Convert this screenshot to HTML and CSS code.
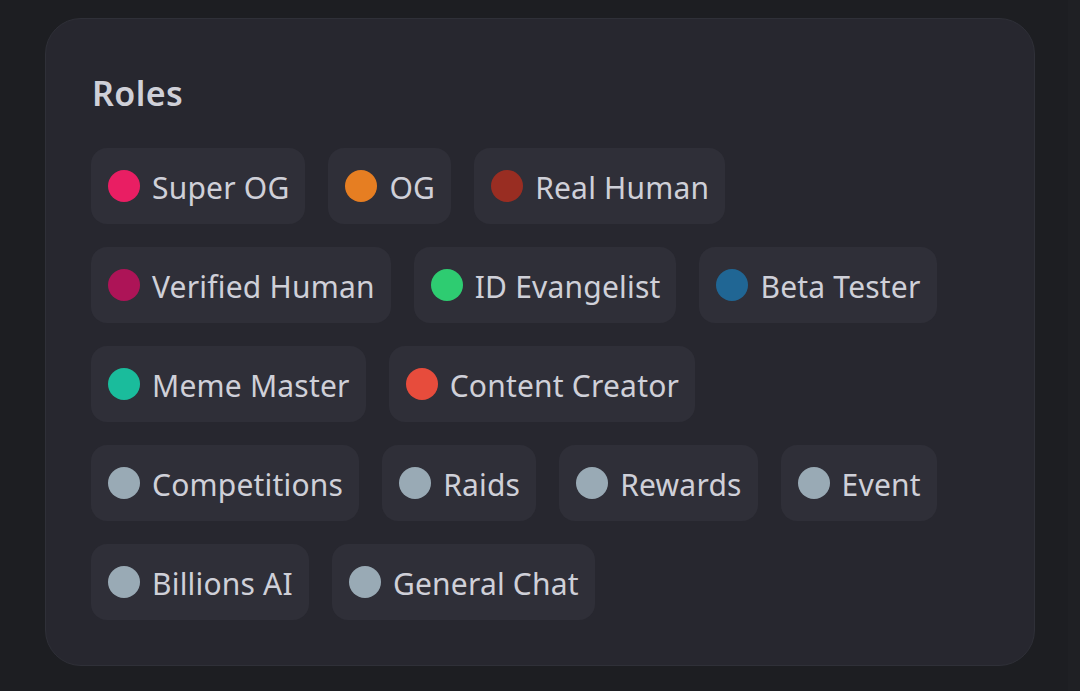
FILE: index.html
```html
<!DOCTYPE html>
<html>
<head>
<meta charset="utf-8">
<link rel="stylesheet" href="styles.css">
</head>
<body>
<div class="page">
  <section class="card">
    <h2 class="title">Roles</h2>
    <div class="roles">
      <div class="row">
        <div class="chip"><span class="dot c-superog"></span><span class="name">Super OG</span></div>
        <div class="chip"><span class="dot c-og"></span><span class="name">OG</span></div>
        <div class="chip"><span class="dot c-real"></span><span class="name">Real Human</span></div>
      </div>
      <div class="row">
        <div class="chip"><span class="dot c-verified"></span><span class="name">Verified Human</span></div>
        <div class="chip"><span class="dot c-id"></span><span class="name">ID Evangelist</span></div>
        <div class="chip"><span class="dot c-beta"></span><span class="name">Beta Tester</span></div>
      </div>
      <div class="row">
        <div class="chip"><span class="dot c-meme"></span><span class="name">Meme Master</span></div>
        <div class="chip"><span class="dot c-content"></span><span class="name">Content Creator</span></div>
      </div>
      <div class="row">
        <div class="chip"><span class="dot c-gray"></span><span class="name">Competitions</span></div>
        <div class="chip"><span class="dot c-gray"></span><span class="name">Raids</span></div>
        <div class="chip"><span class="dot c-gray"></span><span class="name">Rewards</span></div>
        <div class="chip"><span class="dot c-gray"></span><span class="name">Event</span></div>
      </div>
      <div class="row">
        <div class="chip"><span class="dot c-gray"></span><span class="name">Billions AI</span></div>
        <div class="chip"><span class="dot c-gray"></span><span class="name">General Chat</span></div>
      </div>
    </div>
  </section>
  <div class="scrollstrip"></div>
</div>
</body>
</html>
```
FILE: styles.css
```css
html, body {
  margin: 0;
  padding: 0;
  background: #1d1e22;
  font-family: "Noto Sans", "Open Sans", sans-serif;
}
.page {
  width: 1080px;
  height: 691px;
  position: relative;
  padding: 18px 0 0 45px;
  box-sizing: border-box;
}
.card {
  width: 990px;
  height: 648px;
  box-sizing: border-box;
  background: #27272f;
  border: 1px solid #2f3038;
  border-radius: 36px;
  padding: 54px 46px 46px 45px;
}
.title {
  margin: 0 0 0 1px;
  font-size: 34px;
  font-weight: 600;
  line-height: 40px;
  color: #cfd0d8;
  letter-spacing: 0.4px;
}
.roles {
  margin-top: 35px;
  display: flex;
  flex-direction: column;
  gap: 23px;
}
.row {
  display: flex;
  gap: 23px;
}
.chip {
  height: 76px;
  box-sizing: border-box;
  display: flex;
  align-items: center;
  gap: 12px;
  padding: 0 16px 0 17px;
  background: #2f2f38;
  border-radius: 16px;
}
.dot {
  width: 32px;
  height: 32px;
  border-radius: 50%;
  flex: none;
}
.name {
  font-size: 30px;
  line-height: 40px;
  color: #cfd0d8;
  white-space: nowrap;
  letter-spacing: 0.2px;
  position: relative;
  top: 2px;
}
.c-superog { background: #e91e63; }
.c-og { background: #e67e22; }
.c-real { background: #992d22; }
.c-verified { background: #ad1457; }
.c-id { background: #2ecc71; }
.c-beta { background: #206694; }
.c-meme { background: #1abc9c; }
.c-content { background: #e74c3c; }
.c-gray { background: #99aab5; }
.scrollstrip {
  position: absolute;
  right: 0;
  top: 0;
  width: 12px;
  height: 691px;
  background: #1f2024;
}
```
